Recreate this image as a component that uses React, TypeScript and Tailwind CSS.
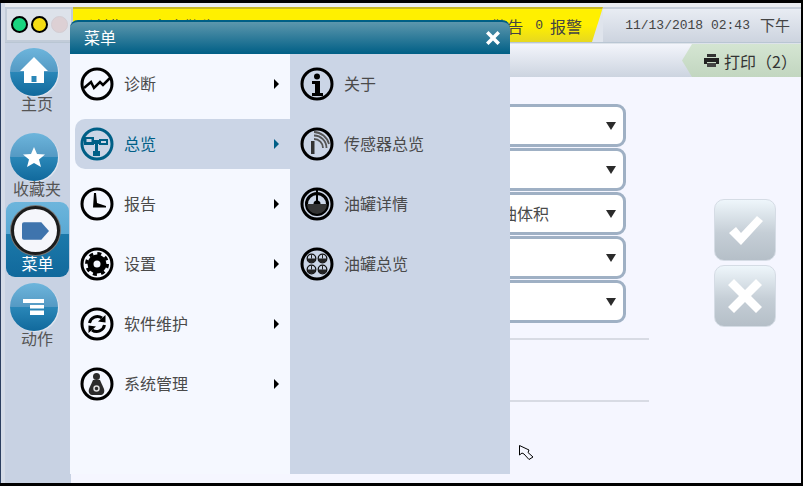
import React from "react";

const cjk = "font-['Noto_Sans_CJK_SC','Liberation_Sans',sans-serif]";

function Ring({ children, fill = "#f5f8ff" }: { children: React.ReactNode; fill?: string }) {
  return (
    <svg width="34" height="34" viewBox="0 0 34 34" className="shrink-0">
      <circle cx="17" cy="17" r="15" fill={fill} stroke="#000" strokeWidth="3" />
      {children}
    </svg>
  );
}

const DiagIcon = () => (
  <Ring>
    <path d="M4 21 L11 15 L14 21 L20 15 L23 18 L30 11" fill="none" stroke="#000" strokeWidth="2.5" />
  </Ring>
);
const OverviewIcon = () => (
  <svg width="34" height="34" viewBox="0 0 34 34" className="shrink-0">
    <circle cx="17" cy="17" r="15" fill="none" stroke="#005f86" strokeWidth="3" />
    <path d="M4 10h10v3h5v-1h9v6h-9v-1h-1v7h2v5h-7v-5h2v-7h-1v1H4z" fill="#005f86" />
    <path d="M6.500 12h5v3h-5zM21 14h5v2h-5z" fill="#cbd5e6" />
  </svg>
);
const ClockIcon = () => (
  <Ring>
    <path d="M14 6 L16 6 L17 16 L26 19 L26 20.500 L13 20.500 Z" fill="#000" />
  </Ring>
);
const GearIcon = () => (
  <Ring>
    <circle cx="17" cy="17" r="6.500" fill="none" stroke="#000" strokeWidth="6" />
    <circle cx="17" cy="17" r="10.500" fill="none" stroke="#000" strokeWidth="3" strokeDasharray="4 4.250" />
  </Ring>
);
const SyncIcon = () => (
  <Ring>
    <path d="M9.500 16 A8 8 0 0 1 22 11" fill="none" stroke="#000" strokeWidth="3" />
    <path d="M25.500 8 L25.500 15.500 L18 14.500 Z" fill="#000" />
    <path d="M24.500 18 A8 8 0 0 1 12 23" fill="none" stroke="#000" strokeWidth="3" />
    <path d="M8.500 26 L8.500 18.500 L16 19.500 Z" fill="#000" />
  </Ring>
);
const AdminIcon = () => (
  <Ring>
    <circle cx="16.500" cy="9.500" r="3.500" fill="#2b2b2b" />
    <path d="M13 13h7l4 9c1 4-1 6-4 6h-7c-3 0-5-2-4-6z" fill="#2b2b2b" />
    <circle cx="16.500" cy="21.500" r="2.500" fill="none" stroke="#ddd" strokeWidth="1.500" />
  </Ring>
);
const InfoIcon = () => (
  <Ring fill="#cbd5e6">
    <circle cx="17" cy="9.500" r="3" fill="#000" />
    <path d="M12 14h8v12h3v3H12v-3h3v-9h-3z" fill="#000" />
  </Ring>
);
const SensorIcon = () => (
  <Ring fill="#cbd5e6">
    <path d="M11 14h3.500v13H11z" fill="#333" />
    <path d="M14 12a9 9 0 0 1 9 9M14 8.500a12.500 12.500 0 0 1 12.500 12.500M14 5a16 16 0 0 1 15 12" fill="none" stroke="#555" strokeWidth="1.800" />
  </Ring>
);
const TankIcon = () => (
  <Ring fill="#cbd5e6">
    <circle cx="17" cy="17" r="10.500" fill="#cbd5e6" stroke="#000" strokeWidth="3" />
    <path d="M7 17h20a10 10 0 0 1-20 0z" fill="#333" />
    <path d="M16 3h2v13h-2z" fill="#000" />
    <path d="M13.500 17a3.500 3.500 0 0 1 7 0z" fill="#000" />
  </Ring>
);
const TanksIcon = () => (
  <Ring fill="#cbd5e6">
    {[[11.500, 11.500], [22.500, 11.500], [11.500, 22.500], [22.500, 22.500]].map(([x, y]) => (
      <g key={`${x}-${y}`}>
        <circle cx={x} cy={y} r="4.300" fill="#cbd5e6" stroke="#111" strokeWidth="1.300" />
        <path d={`M${x - 4} ${y}h8a4 4 0 0 1-8 0z`} fill="#222" />
        <path d={`M${x - 0.5} ${y - 4}h1v4h-1z`} fill="#222" />
      </g>
    ))}
  </Ring>
);

const leftItems = [
  { label: "诊断", icon: <DiagIcon /> },
  { label: "总览", icon: <OverviewIcon />, active: true },
  { label: "报告", icon: <ClockIcon /> },
  { label: "设置", icon: <GearIcon /> },
  { label: "软件维护", icon: <SyncIcon /> },
  { label: "系统管理", icon: <AdminIcon /> },
];

const rightItems = [
  { label: "关于", icon: <InfoIcon /> },
  { label: "传感器总览", icon: <SensorIcon /> },
  { label: "油罐详情", icon: <TankIcon /> },
  { label: "油罐总览", icon: <TanksIcon /> },
];

function SideBtn({ label, children }: { label: string; children: React.ReactNode }) {
  return (
    <div className="flex w-[62px] flex-col items-start">
      <div className="ml-[4px] flex h-12 w-12 items-center justify-center rounded-full bg-[linear-gradient(#6db5dc,#559ac4_49%,#2a87b8_50%,#11699c)] shadow-[1px_1px_1px_#e4e8f0]">
        {children}
      </div>
      <span className="mt-[-3px] self-center text-[16px] leading-[20px] text-[#555]">{label}</span>
    </div>
  );
}

function SelectBox({ text }: { text?: string }) {
  return (
    <div className="flex h-[43px] items-center justify-between rounded-[9px] border-[3px] border-[#9fb0c4] bg-white pr-[7px] pl-[427px] text-[16px] text-[#4a4a4a]">
      <span className="mt-[-2px]">{text}</span>
      <span className="h-0 w-0 border-x-[5px] border-t-[8px] border-x-transparent border-t-[#2b2b2b]" />
    </div>
  );
}

function ActionBtn({ children }: { children: React.ReactNode }) {
  return (
    <div className="flex h-[62px] w-[62px] items-center justify-center rounded-[10px] border border-[#d5dce5] bg-[linear-gradient(#eef6fb,#c5ced6_55%,#b5bfc8)]">
      {children}
    </div>
  );
}

export default function App() {
  return (
    <div className={`relative h-[486px] w-[803px] overflow-hidden bg-black pt-[3px] pr-[2px] pb-[3px] ${cjk}`}>
      <div className="flex h-[480px] flex-col border-l border-l-[#2c3f60]">
        <div className="flex h-full flex-col border-l-[4px] border-l-[#d5dce8] bg-[#f5f6ff]">
          {/* top status bar */}
          <div className="flex h-[39px] shrink-0 items-stretch border-t-[4px] border-t-[#e9ebef] bg-[#dfe4ec]">
            <div className="flex w-[68px] shrink-0 items-center gap-[3px] border-[2px] border-[#c2ccd9] bg-[#dde2ea] pl-[4px]">
              <span className="h-[17px] w-[17px] rounded-full border-[2px] border-black bg-[#19d47f]" />
              <span className="h-[17px] w-[17px] rounded-full border-[2px] border-black bg-[#f5dc14]" />
              <span className="h-[17px] w-[17px] rounded-full border border-[#d3ccd2] bg-[#ddd0d4]" />
            </div>
            <div className="flex w-[530px] shrink-0 items-center justify-between border-t-[2px] border-t-[#c8b820] bg-[linear-gradient(#fff000,#fff000_50%,#e6d820)] pr-[21px] pl-[15px] text-[16px] text-[#444] [clip-path:polygon(0_0,100%_0,calc(100%-11px)_100%,0_100%)]">
              <span>
                计罐<span className="ml-[32px]">容度警告</span>
              </span>
              <span className="flex items-center">
                警告
                <span className="mr-[7px] ml-[12px] font-['Liberation_Mono',monospace] text-[13px]">0</span>
                报警
              </span>
            </div>
            <div className="flex flex-1 items-center justify-end border-t-[2px] border-t-[#c5cdd8] bg-[linear-gradient(#e8ecf3,#cdd4df)] pr-[11px] text-[#444]">
              <span className="font-['Liberation_Mono',monospace] text-[13px]">11/13/2018 02:43</span>
              <span className="ml-[10px] text-[15px]">下午</span>
            </div>
          </div>

          {/* body */}
          <div className="flex min-h-0 flex-1 border-t border-t-[#b9c6d3]">
            <div className="flex w-[66px] shrink-0 flex-col items-start bg-[#c8d2e3] pt-[5px] pl-[1px]">
              <div className="h-[85px]">
                <SideBtn label="主页">
                  <svg width="30" height="30" viewBox="0 0 30 30">
                    <path d="M15 0 L29 14 H25 V26 H5 V14 H1 Z" fill="#fff" />
                    <path d="M12.500 19h5v6h-5z" fill="#2a87b8" />
                  </svg>
                </SideBtn>
              </div>
              <div className="h-[69px]">
                <SideBtn label="收藏夹">
                  <svg width="24" height="24" viewBox="0 0 24 24">
                    <path d="M12 2 L15 9 L23 9.500 L17 14.500 L19 22 L12 18 L5 22 L7 14.500 L1 9.500 L9 9 Z" fill="#fff" />
                  </svg>
                </SideBtn>
              </div>
              <div className="flex h-[75px] w-[63px] flex-col items-start overflow-hidden rounded-[9px] bg-[linear-gradient(#6db5dc,#5aa9d4_42%,#1c79aa_43%,#11699c)]">
                <div className="mt-[4px] ml-[5px] flex h-[49px] w-[49px] shrink-0 items-center justify-center rounded-full border-[3px] border-[#1c1c1c] bg-[#f5f6fb] shadow-[0_0_0_1px_#777]">
                  <svg width="27" height="18" viewBox="0 0 28 18">
                    <path d="M2 0h18l8 9-8 9H2a2 2 0 0 1-2-2V2a2 2 0 0 1 2-2z" fill="#3f74ad" />
                  </svg>
                </div>
                <span className="mt-[-2px] self-center text-[16px] leading-[20px] text-white">菜单</span>
              </div>
              <div className="mt-[6px]">
                <SideBtn label="动作">
                  <svg width="24" height="20" viewBox="0 0 24 20">
                    <path d="M1 2h21v4H1zM8 8h14v3.500H8zM8 13.500h14v4.500H8z" fill="#fff" />
                  </svg>
                </SideBtn>
              </div>
            </div>

            <div className="flex min-w-0 flex-1 flex-col">
              {/* second bar */}
              <div className="flex h-[34px] shrink-0 justify-end border-t border-t-[#dde3ea] bg-[linear-gradient(#f3f5fb,#ccd4e0)]">
                <div className="flex w-[119px] items-center gap-[5px] bg-[linear-gradient(#d4e5d2,#c2d6c0)] pl-[22px] text-[16px] text-[#333] [clip-path:polygon(0_50%,10px_0,100%_0,100%_100%,10px_100%)]">
                  <svg width="15" height="13" viewBox="0 0 15 13">
                    <path d="M3 0h9v3H3z" fill="#333" />
                    <path d="M0 4h15v6h-3V8H3v2H0z" fill="#222" />
                    <path d="M3 9h9v4H3z" fill="#444" />
                  </svg>
                  <span>打印（2）</span>
                </div>
              </div>

              {/* form behind the menu */}
              <div className="flex flex-1 pt-[27px]">
                <div className="w-[578px] shrink-0">
                  <div className="flex w-[555px] flex-col gap-[1px]">
                    <SelectBox />
                    <SelectBox />
                    <SelectBox text="油体积" />
                    <SelectBox />
                    <SelectBox />
                  </div>
                  <div className="mt-[15px] h-[64px] border-y-2 border-[#d8dbe4]" />
                </div>
                <div className="ml-[65px] flex flex-col gap-[4px] pt-[95px]">
                  <ActionBtn>
                    <svg width="38" height="34" viewBox="0 0 38 34">
                      <path d="M3 20 L10 14 L15 20 L31 3 L37 8 L15 32 Z" fill="#fff" />
                    </svg>
                  </ActionBtn>
                  <ActionBtn>
                    <svg width="34" height="34" viewBox="0 0 34 34">
                      <path d="M6 0 L17 11 L28 0 L34 6 L23 17 L34 28 L28 34 L17 23 L6 34 L0 28 L11 17 L0 6 Z" fill="#fff" />
                    </svg>
                  </ActionBtn>
                </div>
              </div>
            </div>
          </div>
        </div>
      </div>

      {/* open menu */}
      <div className="absolute top-[20px] left-[70px] flex h-[454px] w-[440px] flex-col">
        <div className="flex h-[34px] shrink-0 items-center justify-between rounded-t-[8px] border-t-2 border-t-[#005f86] bg-[linear-gradient(#5d97ad,#005f86)] pr-[10px] pl-[14px] text-[16px] text-white">
          <span className="mt-[-2px]">菜单</span>
          <svg width="14" height="14" viewBox="0 0 14 14">
            <path d="M2.500 0 L7 4.500 L11.500 0 L14 2.500 L9.500 7 L14 11.500 L11.500 14 L7 9.500 L2.500 14 L0 11.500 L4.500 7 L0 2.500 Z" fill="#fff" />
          </svg>
        </div>
        <div className="flex min-h-0 flex-1">
          <div className="flex w-[220px] flex-col gap-[10px] bg-[#f5f8ff] pt-[5px]">
            {leftItems.map((it) => (
              <div
                key={it.label}
                className={`ml-[5px] flex h-[50px] items-center rounded-l-[10px] pl-[5px] text-[16px] ${it.active ? "bg-[#cbd5e6] text-[#005f86]" : "text-[#4a4a4a]"}`}
              >
                {it.icon}
                <span className="mt-[-2px] ml-[10px] flex-1">{it.label}</span>
                <span
                  className={`mr-[11px] h-0 w-0 border-y-[5px] border-l-[5px] border-y-transparent ${it.active ? "border-l-[#005f86]" : "border-l-black"}`}
                />
              </div>
            ))}
          </div>
          <div className="flex flex-1 flex-col gap-[10px] bg-[#cbd5e6] pt-[5px]">
            {rightItems.map((it) => (
              <div key={it.label} className="flex h-[50px] items-center pl-[10px] text-[16px] text-[#4a4a4a]">
                {it.icon}
                <span className="mt-[-2px] ml-[10px]">{it.label}</span>
              </div>
            ))}
          </div>
        </div>
      </div>

      {/* mouse cursor */}
      <svg width="16" height="16" viewBox="0 0 16 16" className="absolute top-[445px] left-[519px]">
        <path d="M0.500 0.500 L0.500 10 L3 8 L5 9 L10 14.500 L14 12 L9 7.500 L10 5 Z" fill="#f5f6ff" stroke="#000" strokeWidth="1" />
      </svg>
    </div>
  );
}
